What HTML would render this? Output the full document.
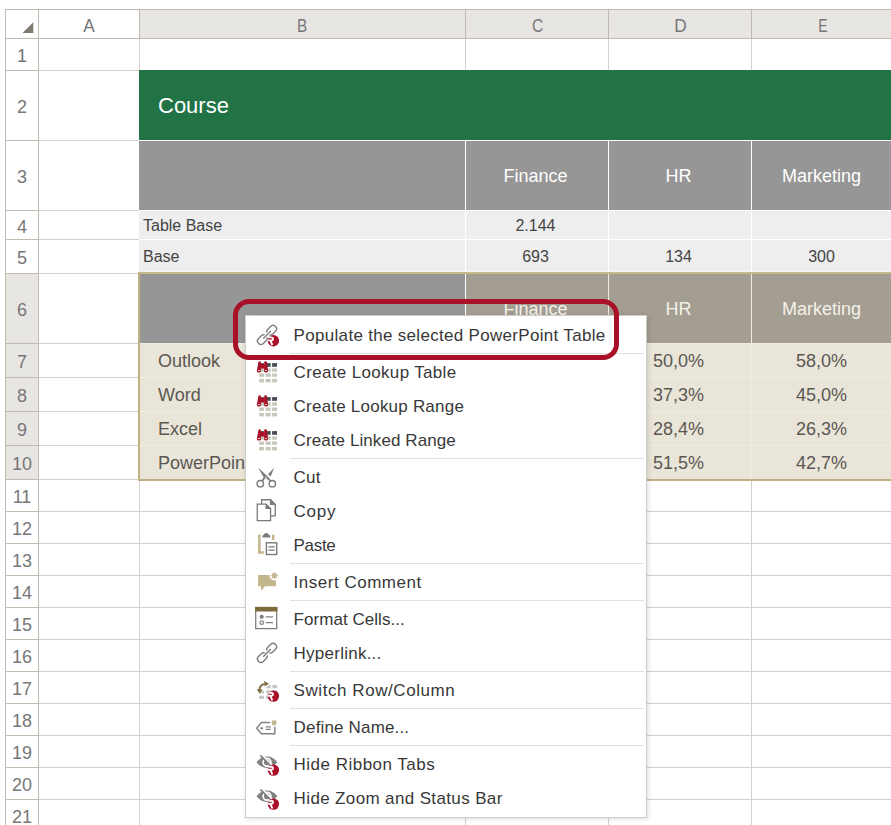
<!DOCTYPE html>
<html><head><meta charset="utf-8"><title>Excel context menu</title>
<style>
html,body{margin:0;padding:0;}
body{width:891px;height:825px;overflow:hidden;background:#fff;position:relative;font-family:"Liberation Sans",sans-serif;}
#g>div,#g>svg{position:absolute;}
.t{white-space:nowrap;text-align:center;overflow:visible;}
.t.l{text-align:left;}
.hd{font-size:18px;color:#777;}
.title{font-size:22px;color:#fff;text-align:left;}
.h3{font-size:18px;color:#fff;}
.h3.sel{color:#f4f1ea;}
.d{font-size:16px;color:#444;}
.p{font-size:18px;color:#5b5852;}
#m{position:absolute;left:245px;top:315px;width:400px;height:497px;padding:2px 0;border:1px solid #cfcdc9;background:#fff;box-shadow:1px 1px 5px rgba(0,0,0,0.14);}
#m .i{position:relative;height:34px;line-height:34px;font-size:17px;color:#383838;white-space:nowrap;}
#m .i span{position:absolute;left:47.6px;top:1px;}
#m .i svg{position:absolute;left:9px;top:5px;overflow:visible;}
#m .s{height:1px;margin:1px 2px 1px 44px;background:#e1e1e1;}
#hl{position:absolute;left:233px;top:299px;width:376px;height:51px;border:5px solid #a81127;border-radius:16px;}

</style></head>
<body>
<div id="g">
<div style="left:140px;top:10px;width:751px;height:28px;background:#e8e6e2;"></div>
<div style="left:6px;top:274px;width:32px;height:205px;background:#e8e6e2;"></div>
<div style="left:139px;top:39px;width:1px;height:786px;background:#d4d1cb;"></div>
<div style="left:465px;top:39px;width:1px;height:786px;background:#d4d1cb;"></div>
<div style="left:608px;top:39px;width:1px;height:786px;background:#d4d1cb;"></div>
<div style="left:751px;top:39px;width:1px;height:786px;background:#d4d1cb;"></div>
<div style="left:39px;top:70px;width:852px;height:1px;background:#d4d1cb;"></div>
<div style="left:39px;top:140px;width:852px;height:1px;background:#d4d1cb;"></div>
<div style="left:39px;top:210px;width:852px;height:1px;background:#d4d1cb;"></div>
<div style="left:39px;top:239px;width:852px;height:1px;background:#d4d1cb;"></div>
<div style="left:39px;top:273px;width:852px;height:1px;background:#d4d1cb;"></div>
<div style="left:39px;top:343px;width:852px;height:1px;background:#d4d1cb;"></div>
<div style="left:39px;top:377px;width:852px;height:1px;background:#d4d1cb;"></div>
<div style="left:39px;top:411px;width:852px;height:1px;background:#d4d1cb;"></div>
<div style="left:39px;top:445px;width:852px;height:1px;background:#d4d1cb;"></div>
<div style="left:39px;top:479px;width:852px;height:1px;background:#d4d1cb;"></div>
<div style="left:39px;top:511px;width:852px;height:1px;background:#d4d1cb;"></div>
<div style="left:39px;top:543px;width:852px;height:1px;background:#d4d1cb;"></div>
<div style="left:39px;top:575px;width:852px;height:1px;background:#d4d1cb;"></div>
<div style="left:39px;top:607px;width:852px;height:1px;background:#d4d1cb;"></div>
<div style="left:39px;top:639px;width:852px;height:1px;background:#d4d1cb;"></div>
<div style="left:39px;top:671px;width:852px;height:1px;background:#d4d1cb;"></div>
<div style="left:39px;top:703px;width:852px;height:1px;background:#d4d1cb;"></div>
<div style="left:39px;top:735px;width:852px;height:1px;background:#d4d1cb;"></div>
<div style="left:39px;top:767px;width:852px;height:1px;background:#d4d1cb;"></div>
<div style="left:39px;top:799px;width:852px;height:1px;background:#d4d1cb;"></div>
<div style="left:39px;top:831px;width:852px;height:1px;background:#d4d1cb;"></div>
<div style="left:5px;top:9px;width:886px;height:1px;background:#c0bbae;"></div>
<div style="left:5px;top:38px;width:886px;height:1px;background:#c0bbae;"></div>
<div style="left:5px;top:9px;width:1px;height:30px;background:#c0bbae;"></div>
<div style="left:38px;top:9px;width:1px;height:30px;background:#c0bbae;"></div>
<div style="left:139px;top:9px;width:1px;height:30px;background:#c0bbae;"></div>
<div style="left:465px;top:9px;width:1px;height:30px;background:#c0bbae;"></div>
<div style="left:608px;top:9px;width:1px;height:30px;background:#c0bbae;"></div>
<div style="left:751px;top:9px;width:1px;height:30px;background:#c0bbae;"></div>
<div style="left:5px;top:9px;width:1px;height:816px;background:#c0bbae;"></div>
<div style="left:38px;top:9px;width:1px;height:816px;background:#c0bbae;"></div>
<div style="left:5px;top:70px;width:34px;height:1px;background:#c0bbae;"></div>
<div style="left:5px;top:140px;width:34px;height:1px;background:#c0bbae;"></div>
<div style="left:5px;top:210px;width:34px;height:1px;background:#c0bbae;"></div>
<div style="left:5px;top:239px;width:34px;height:1px;background:#c0bbae;"></div>
<div style="left:5px;top:273px;width:34px;height:1px;background:#c0bbae;"></div>
<div style="left:5px;top:343px;width:34px;height:1px;background:#c0bbae;"></div>
<div style="left:5px;top:377px;width:34px;height:1px;background:#c0bbae;"></div>
<div style="left:5px;top:411px;width:34px;height:1px;background:#c0bbae;"></div>
<div style="left:5px;top:445px;width:34px;height:1px;background:#c0bbae;"></div>
<div style="left:5px;top:479px;width:34px;height:1px;background:#c0bbae;"></div>
<div style="left:5px;top:511px;width:34px;height:1px;background:#c0bbae;"></div>
<div style="left:5px;top:543px;width:34px;height:1px;background:#c0bbae;"></div>
<div style="left:5px;top:575px;width:34px;height:1px;background:#c0bbae;"></div>
<div style="left:5px;top:607px;width:34px;height:1px;background:#c0bbae;"></div>
<div style="left:5px;top:639px;width:34px;height:1px;background:#c0bbae;"></div>
<div style="left:5px;top:671px;width:34px;height:1px;background:#c0bbae;"></div>
<div style="left:5px;top:703px;width:34px;height:1px;background:#c0bbae;"></div>
<div style="left:5px;top:735px;width:34px;height:1px;background:#c0bbae;"></div>
<div style="left:5px;top:767px;width:34px;height:1px;background:#c0bbae;"></div>
<div style="left:5px;top:799px;width:34px;height:1px;background:#c0bbae;"></div>
<div style="left:5px;top:831px;width:34px;height:1px;background:#c0bbae;"></div>
<svg style="left:22px;top:22px" width="12" height="12" viewBox="0 0 12 12"><path d="M11.3 0.3 L11.3 11 L0.5 11 Z" fill="#807c72"/></svg>
<div class="t hd" style="left:39px;top:12px;width:100px;height:28px;line-height:28px;"><span style="display:inline-block;transform:scaleX(0.96)">A</span></div>
<div class="t hd" style="left:140px;top:12px;width:325px;height:28px;line-height:28px;"><span style="display:inline-block;transform:scaleX(0.85)">B</span></div>
<div class="t hd" style="left:466px;top:12px;width:142px;height:28px;line-height:28px;"><span style="display:inline-block;transform:scaleX(0.86)">C</span></div>
<div class="t hd" style="left:609px;top:12px;width:142px;height:28px;line-height:28px;"><span style="display:inline-block;transform:scaleX(0.96)">D</span></div>
<div class="t hd" style="left:752px;top:12px;width:142px;height:28px;line-height:28px;"><span style="display:inline-block;transform:scaleX(0.78)">E</span></div>
<div class="t hd" style="left:6px;top:41px;width:32px;height:31px;line-height:31px;">1</div>
<div class="t hd" style="left:6px;top:73px;width:32px;height:69px;line-height:69px;">2</div>
<div class="t hd" style="left:6px;top:143px;width:32px;height:69px;line-height:69px;">3</div>
<div class="t hd" style="left:6px;top:213px;width:32px;height:28px;line-height:28px;">4</div>
<div class="t hd" style="left:6px;top:242px;width:32px;height:33px;line-height:33px;">5</div>
<div class="t hd" style="left:6px;top:276px;width:32px;height:69px;line-height:69px;">6</div>
<div class="t hd" style="left:6px;top:346px;width:32px;height:33px;line-height:33px;">7</div>
<div class="t hd" style="left:6px;top:380px;width:32px;height:33px;line-height:33px;">8</div>
<div class="t hd" style="left:6px;top:414px;width:32px;height:33px;line-height:33px;">9</div>
<div class="t hd" style="left:6px;top:448px;width:32px;height:33px;line-height:33px;">10</div>
<div class="t hd" style="left:6px;top:482px;width:32px;height:31px;line-height:31px;">11</div>
<div class="t hd" style="left:6px;top:514px;width:32px;height:31px;line-height:31px;">12</div>
<div class="t hd" style="left:6px;top:546px;width:32px;height:31px;line-height:31px;">13</div>
<div class="t hd" style="left:6px;top:578px;width:32px;height:31px;line-height:31px;">14</div>
<div class="t hd" style="left:6px;top:610px;width:32px;height:31px;line-height:31px;">15</div>
<div class="t hd" style="left:6px;top:642px;width:32px;height:31px;line-height:31px;">16</div>
<div class="t hd" style="left:6px;top:674px;width:32px;height:31px;line-height:31px;">17</div>
<div class="t hd" style="left:6px;top:706px;width:32px;height:31px;line-height:31px;">18</div>
<div class="t hd" style="left:6px;top:738px;width:32px;height:31px;line-height:31px;">19</div>
<div class="t hd" style="left:6px;top:770px;width:32px;height:31px;line-height:31px;">20</div>
<div class="t hd" style="left:6px;top:802px;width:32px;height:31px;line-height:31px;">21</div>
<div style="left:139px;top:70px;width:752px;height:70px;background:#217346;"></div>
<div style="left:139px;top:140px;width:752px;height:1px;background:#ffffff;"></div>
<div style="left:139px;top:141px;width:752px;height:69px;background:#969696;"></div>
<div style="left:139px;top:210px;width:752px;height:1px;background:#ffffff;"></div>
<div style="left:139px;top:211px;width:752px;height:28px;background:#eeeeee;"></div>
<div style="left:139px;top:239px;width:752px;height:1px;background:#ffffff;"></div>
<div style="left:139px;top:240px;width:752px;height:33px;background:#eeeeee;"></div>
<div style="left:139px;top:271px;width:752px;height:1px;background:#f5f5f8;"></div>
<div style="left:465px;top:141px;width:1px;height:132px;background:#ffffff;"></div>
<div style="left:608px;top:141px;width:1px;height:132px;background:#ffffff;"></div>
<div style="left:751px;top:141px;width:1px;height:132px;background:#ffffff;"></div>
<div style="left:139px;top:274px;width:326px;height:69px;background:#969696;"></div>
<div style="left:465px;top:274px;width:426px;height:69px;background:#a39e91;"></div>
<div style="left:465px;top:274px;width:1px;height:69px;background:#ffffff;"></div>
<div style="left:608px;top:274px;width:1px;height:69px;background:#efebdf;"></div>
<div style="left:751px;top:274px;width:1px;height:69px;background:#efebdf;"></div>
<div style="left:139px;top:343px;width:752px;height:136px;background:#e9e5d9;"></div>
<div style="left:139px;top:343px;width:752px;height:1px;background:#f0ece0;"></div>
<div style="left:139px;top:377px;width:752px;height:1px;background:#f0ece0;"></div>
<div style="left:139px;top:411px;width:752px;height:1px;background:#f0ece0;"></div>
<div style="left:139px;top:445px;width:752px;height:1px;background:#f0ece0;"></div>
<div style="left:465px;top:343px;width:1px;height:136px;background:#f0ece0;"></div>
<div style="left:608px;top:343px;width:1px;height:136px;background:#f0ece0;"></div>
<div style="left:751px;top:343px;width:1px;height:136px;background:#f0ece0;"></div>
<div style="left:138px;top:272px;width:753px;height:2px;background:#c6b98a;"></div>
<div style="left:138px;top:272px;width:2px;height:209px;background:#bfb182;"></div>
<div style="left:138px;top:479px;width:753px;height:2px;background:#bfb182;"></div>
<div class="t title" style="left:158px;top:71px;width:300px;height:69px;line-height:69px;">Course</div>
<div class="t h3" style="left:464.5px;top:142px;width:142px;height:69px;line-height:69px;">Finance</div>
<div class="t h3 sel" style="left:464.5px;top:275px;width:142px;height:69px;line-height:69px;">Finance</div>
<div class="t h3" style="left:607.5px;top:142px;width:142px;height:69px;line-height:69px;">HR</div>
<div class="t h3 sel" style="left:607.5px;top:275px;width:142px;height:69px;line-height:69px;">HR</div>
<div class="t h3" style="left:750.5px;top:142px;width:142px;height:69px;line-height:69px;">Marketing</div>
<div class="t h3 sel" style="left:750.5px;top:275px;width:142px;height:69px;line-height:69px;">Marketing</div>
<div class="t d l" style="left:143px;top:212px;width:300px;height:28px;line-height:28px;">Table Base</div>
<div class="t d l" style="left:143px;top:240px;width:300px;height:33px;line-height:33px;">Base</div>
<div class="t d" style="left:464.5px;top:212px;width:142px;height:28px;line-height:28px;">2.144</div>
<div class="t d" style="left:464.5px;top:240px;width:142px;height:33px;line-height:33px;">693</div>
<div class="t d" style="left:607.5px;top:240px;width:142px;height:33px;line-height:33px;">134</div>
<div class="t d" style="left:750.5px;top:240px;width:142px;height:33px;line-height:33px;">300</div>
<div class="t p l" style="left:158px;top:345px;width:300px;height:33px;line-height:33px;">Outlook</div>
<div class="t p" style="left:607.5px;top:345px;width:142px;height:33px;line-height:33px;">50,0%</div>
<div class="t p" style="left:750.5px;top:345px;width:142px;height:33px;line-height:33px;">58,0%</div>
<div class="t p l" style="left:158px;top:379px;width:300px;height:33px;line-height:33px;">Word</div>
<div class="t p" style="left:607.5px;top:379px;width:142px;height:33px;line-height:33px;">37,3%</div>
<div class="t p" style="left:750.5px;top:379px;width:142px;height:33px;line-height:33px;">45,0%</div>
<div class="t p l" style="left:158px;top:413px;width:300px;height:33px;line-height:33px;">Excel</div>
<div class="t p" style="left:607.5px;top:413px;width:142px;height:33px;line-height:33px;">28,4%</div>
<div class="t p" style="left:750.5px;top:413px;width:142px;height:33px;line-height:33px;">26,3%</div>
<div class="t p l" style="left:158px;top:447px;width:300px;height:33px;line-height:33px;">PowerPoint</div>
<div class="t p" style="left:607.5px;top:447px;width:142px;height:33px;line-height:33px;">51,5%</div>
<div class="t p" style="left:750.5px;top:447px;width:142px;height:33px;line-height:33px;">42,7%</div>
</div>
<div id="m">
<div class="i"><svg width="24" height="24" viewBox="0 0 24 24"><g fill="none" stroke="#808080" stroke-width="1.4"><rect x="-5.3" y="-3.4" width="10.6" height="6.8" rx="3.4" transform="translate(16.74,7.16) rotate(-45)"/><rect x="-5.3" y="-3.4" width="10.6" height="6.8" rx="3.4" transform="translate(7.26,16.64) rotate(-45)"/></g><path d="M10.16,13.74 L13.84,10.06" stroke="#fff" stroke-width="3.4" fill="none"/><path d="M8.18,15.72 L15.82,8.08" stroke="#808080" stroke-width="1.4" fill="none"/><clipPath id="rb1"><circle cx="0" cy="0" r="5.7"/></clipPath><g transform="translate(18.4,17.7)"><circle cx="0" cy="0" r="5.7" fill="#a81127"/><g clip-path="url(#rb1)" fill="none" stroke="#fff" stroke-width="1.9"><path d="M-6.5,-3.3 H-1.9 a1.5,1.5 0 0 1 0,3.0 H-6.5 M-2.9,-0.3 L-1.1,4.4"/></g></g></svg><span style="letter-spacing:0.308px">Populate the selected PowerPoint Table</span></div>
<div class="s"></div>
<div class="i"><svg width="24" height="24" viewBox="0 0 24 24"><rect x="4.2" y="3.1" width="4.7" height="3.7" fill="#454c54"/><rect x="10.6" y="3.1" width="5.1" height="3.7" fill="#454c54"/><rect x="17.1" y="3.1" width="4.9" height="3.7" fill="#454c54"/><rect x="4.2" y="8.4" width="4.7" height="3.3" fill="#c5c7b9"/><rect x="10.6" y="8.4" width="5.1" height="3.3" fill="#c5c7b9"/><rect x="17.1" y="8.4" width="4.9" height="3.3" fill="#c5c7b9"/><rect x="4.2" y="13.5" width="4.7" height="3.3" fill="#c5c7b9"/><rect x="10.6" y="13.5" width="5.1" height="3.3" fill="#c5c7b9"/><rect x="17.1" y="13.5" width="4.9" height="3.3" fill="#c5c7b9"/><rect x="4.2" y="18.9" width="4.7" height="3.5" fill="#c5c7b9"/><rect x="10.6" y="18.9" width="5.1" height="3.5" fill="#c5c7b9"/><rect x="17.1" y="18.9" width="4.9" height="3.5" fill="#c5c7b9"/><g fill="#a81127"><path d="M3.4,2.3 Q3.5,1.3 4.6,1.3 Q5.8,1.3 5.9,2.3 L5.9,11.3 Q5.9,12.6 4,12.6 Q1.7,12.6 1.8,11 Z"/><path d="M9.2,2.3 Q9.3,1.3 10.6,1.3 Q11.9,1.3 12,2.3 L13,11 Q13,12.6 11,12.6 Q9.1,12.6 9.1,11.3 Z"/><rect x="5.6" y="3.9" width="3.9" height="4.7"/></g><rect x="3.1" y="10.1" width="1.8" height="0.9" fill="#fff"/><rect x="10.2" y="10.1" width="1.7" height="0.9" fill="#fff"/></svg><span style="letter-spacing:0.333px">Create Lookup Table</span></div>
<div class="i"><svg width="24" height="24" viewBox="0 0 24 24"><rect x="4.2" y="3.1" width="4.7" height="3.7" fill="#454c54"/><rect x="10.6" y="3.1" width="5.1" height="3.7" fill="#454c54"/><rect x="17.1" y="3.1" width="4.9" height="3.7" fill="#454c54"/><rect x="4.2" y="8.4" width="4.7" height="3.3" fill="#c5c7b9"/><rect x="10.6" y="8.4" width="5.1" height="3.3" fill="#c5c7b9"/><rect x="17.1" y="8.4" width="4.9" height="3.3" fill="#c5c7b9"/><rect x="4.2" y="13.5" width="4.7" height="3.3" fill="#c5c7b9"/><rect x="10.6" y="13.5" width="5.1" height="3.3" fill="#c5c7b9"/><rect x="17.1" y="13.5" width="4.9" height="3.3" fill="#c5c7b9"/><rect x="4.2" y="18.9" width="4.7" height="3.5" fill="#c5c7b9"/><rect x="10.6" y="18.9" width="5.1" height="3.5" fill="#c5c7b9"/><rect x="17.1" y="18.9" width="4.9" height="3.5" fill="#c5c7b9"/><g fill="#a81127"><path d="M3.4,2.3 Q3.5,1.3 4.6,1.3 Q5.8,1.3 5.9,2.3 L5.9,11.3 Q5.9,12.6 4,12.6 Q1.7,12.6 1.8,11 Z"/><path d="M9.2,2.3 Q9.3,1.3 10.6,1.3 Q11.9,1.3 12,2.3 L13,11 Q13,12.6 11,12.6 Q9.1,12.6 9.1,11.3 Z"/><rect x="5.6" y="3.9" width="3.9" height="4.7"/></g><rect x="3.1" y="10.1" width="1.8" height="0.9" fill="#fff"/><rect x="10.2" y="10.1" width="1.7" height="0.9" fill="#fff"/></svg><span style="letter-spacing:0.217px">Create Lookup Range</span></div>
<div class="i"><svg width="24" height="24" viewBox="0 0 24 24"><rect x="4.2" y="3.1" width="4.7" height="3.7" fill="#454c54"/><rect x="10.6" y="3.1" width="5.1" height="3.7" fill="#454c54"/><rect x="17.1" y="3.1" width="4.9" height="3.7" fill="#454c54"/><rect x="4.2" y="8.4" width="4.7" height="3.3" fill="#c5c7b9"/><rect x="10.6" y="8.4" width="5.1" height="3.3" fill="#c5c7b9"/><rect x="17.1" y="8.4" width="4.9" height="3.3" fill="#c5c7b9"/><rect x="4.2" y="13.5" width="4.7" height="3.3" fill="#c5c7b9"/><rect x="10.6" y="13.5" width="5.1" height="3.3" fill="#c5c7b9"/><rect x="17.1" y="13.5" width="4.9" height="3.3" fill="#c5c7b9"/><rect x="4.2" y="18.9" width="4.7" height="3.5" fill="#c5c7b9"/><rect x="10.6" y="18.9" width="5.1" height="3.5" fill="#c5c7b9"/><rect x="17.1" y="18.9" width="4.9" height="3.5" fill="#c5c7b9"/><g fill="#a81127"><path d="M3.4,2.3 Q3.5,1.3 4.6,1.3 Q5.8,1.3 5.9,2.3 L5.9,11.3 Q5.9,12.6 4,12.6 Q1.7,12.6 1.8,11 Z"/><path d="M9.2,2.3 Q9.3,1.3 10.6,1.3 Q11.9,1.3 12,2.3 L13,11 Q13,12.6 11,12.6 Q9.1,12.6 9.1,11.3 Z"/><rect x="5.6" y="3.9" width="3.9" height="4.7"/></g><rect x="3.1" y="10.1" width="1.8" height="0.9" fill="#fff"/><rect x="10.2" y="10.1" width="1.7" height="0.9" fill="#fff"/></svg><span style="letter-spacing:0.083px">Create Linked Range</span></div>
<div class="s"></div>
<div class="i"><svg width="24" height="24" viewBox="0 0 24 24"><g fill="none" stroke="#7a7a7a" stroke-width="1.4"><circle cx="5.3" cy="18.7" r="3.2"/><circle cx="17.3" cy="18.7" r="3.2"/></g><path d="M3.2,2.7 L13.5,12.2 L16,15.4 L14.8,16.3 L12,13.9 L8.9,12.7 Z" fill="#7a7a7a"/><path d="M19.2,2.7 L15.6,11.6 L12.9,9.3 Z" fill="#7a7a7a"/><path d="M9.3,13 L7.2,15.9" stroke="#7a7a7a" stroke-width="1.9" fill="none"/><circle cx="11.1" cy="12.6" r="0.75" fill="#fff"/></svg><span style="letter-spacing:0.200px">Cut</span></div>
<div class="i"><svg width="24" height="24" viewBox="0 0 24 24"><g fill="#fff" stroke="#7a7a7a" stroke-width="1.3" stroke-linejoin="miter"><path d="M6.65,0.75 H15.5 L20.25,5.3 V16.85 H6.65 Z"/><path d="M2.25,5.15 H11.1 L15.55,9.5 V21.65 H2.25 Z"/></g><path d="M14.9,0.4 V5.9 H20.6 Z" fill="#7a7a7a"/><path d="M10.5,4.8 V10.1 H15.9 Z" fill="#7a7a7a"/></svg><span style="letter-spacing:0.733px">Copy</span></div>
<div class="i"><svg width="24" height="24" viewBox="0 0 24 24"><path d="M3.1,1.5 H5.6 V18.2 H8.9 V20.7 H3.1 Z" fill="#c3b68c"/><rect x="16.9" y="1.8" width="2.55" height="5.1" fill="#c3b68c"/><path d="M7.4,4.5 V3 Q7.4,2.1 8.6,2.1 Q9,-0.1 11.3,-0.1 Q13.6,-0.1 14,2.1 Q15.2,2.1 15.2,3 V4.5 Z" fill="#7c7c7c"/><rect x="11.4" y="9.8" width="10.3" height="11.7" fill="#fff" stroke="#7a7a7a" stroke-width="1.4"/><path d="M13.4,13.8 H19.8 M13.4,17.1 H19.8" stroke="#7a7a7a" stroke-width="1.2" fill="none"/></svg><span style="letter-spacing:-0.325px">Paste</span></div>
<div class="s"></div>
<div class="i"><svg width="24" height="24" viewBox="0 0 24 24"><path d="M3.1,4.9 H20.9 V16.2 H10 L6.3,20.9 L6,16.2 H3.1 Z" fill="#c3b68c"/><circle cx="19.45" cy="5.6" r="4.9" fill="#fff"/><polygon points="19.45,1.90 20.33,3.48 22.07,2.98 21.57,4.72 23.15,5.60 21.57,6.48 22.07,8.22 20.33,7.72 19.45,9.30 18.57,7.72 16.83,8.22 17.33,6.48 15.75,5.60 17.33,4.72 16.83,2.98 18.57,3.48" fill="#c3b68c"/></svg><span style="letter-spacing:0.508px">Insert Comment</span></div>
<div class="s"></div>
<div class="i"><svg width="24" height="24" viewBox="0 0 24 24"><rect x="0.7" y="0.6" width="21" height="21" fill="#fff" stroke="#808080" stroke-width="1.3"/><rect x="0" y="-0.1" width="22.4" height="4.6" fill="#7d6b3c"/><circle cx="6.7" cy="9.8" r="2.1" fill="#808080"/><circle cx="6.7" cy="15.7" r="1.75" fill="none" stroke="#808080" stroke-width="1.2"/><path d="M10.7,9.8 H18 M10.7,15.7 H18" stroke="#808080" stroke-width="1.2" fill="none"/></svg><span style="letter-spacing:0.043px">Format Cells...</span></div>
<div class="i"><svg width="24" height="24" viewBox="0 0 24 24"><g fill="none" stroke="#7a7a7a" stroke-width="1.4"><rect x="-5.3" y="-3.4" width="10.6" height="6.8" rx="3.4" transform="translate(16.74,7.16) rotate(-45)"/><rect x="-5.3" y="-3.4" width="10.6" height="6.8" rx="3.4" transform="translate(7.26,16.64) rotate(-45)"/></g><path d="M10.16,13.74 L13.84,10.06" stroke="#fff" stroke-width="3.4" fill="none"/><path d="M8.18,15.72 L15.82,8.08" stroke="#7a7a7a" stroke-width="1.4" fill="none"/></svg><span style="letter-spacing:0.245px">Hyperlink...</span></div>
<div class="s"></div>
<div class="i"><svg width="24" height="24" viewBox="0 0 24 24"><rect x="4.2" y="7" width="4.7" height="3.3" fill="#c3c3c3"/><rect x="11.3" y="7" width="4.5" height="3.3" fill="#c3c3c3"/><rect x="17.5" y="7" width="4.7" height="3.3" fill="#c3c3c3"/><rect x="4.2" y="12.3" width="4.7" height="3.2" fill="#c3c3c3"/><rect x="11.3" y="12.3" width="4.5" height="3.2" fill="#c3c3c3"/><rect x="17.5" y="12.3" width="4.7" height="3.2" fill="#c3c3c3"/><rect x="4.2" y="17.7" width="4.7" height="3.1" fill="#c3c3c3"/><rect x="11.3" y="17.7" width="4.5" height="3.1" fill="#c3c3c3"/><rect x="17.5" y="17.7" width="4.7" height="3.1" fill="#c3c3c3"/><path d="M0,0 L21.8,0 L0,19.2 Z" fill="#fff"/><path d="M4.7,11.4 Q4.5,7.2 9.5,5.8" fill="none" stroke="#7d6b3c" stroke-width="1.9"/><path d="M1.8,11 L7.6,11.4 L4.5,15.7 Z" fill="#7d6b3c"/><path d="M9.1,3 L14,5.7 L9.6,8.6 Z" fill="#7d6b3c"/><clipPath id="rb2"><circle cx="0" cy="0" r="5.7"/></clipPath><g transform="translate(18.4,18.1)"><circle cx="0" cy="0" r="5.7" fill="#a81127"/><g clip-path="url(#rb2)" fill="none" stroke="#fff" stroke-width="1.9"><path d="M-6.5,-3.3 H-1.9 a1.5,1.5 0 0 1 0,3.0 H-6.5 M-2.9,-0.3 L-1.1,4.4"/></g></g></svg><span style="letter-spacing:0.562px">Switch Row/Column</span></div>
<div class="s"></div>
<div class="i"><svg width="24" height="24" viewBox="0 0 24 24"><path d="M15.1,7.45 H6.4 L1.7,13.2 L6.4,18.7 H19.8 V11.8" fill="none" stroke="#808080" stroke-width="1.4"/><circle cx="6.7" cy="13.2" r="1.25" fill="#808080"/><path d="M10.7,11.8 H15.8 M10.7,14.4 H15.8" stroke="#808080" stroke-width="1.2" fill="none"/><polygon points="19.10,4.40 19.90,5.86 21.50,5.40 21.04,7.00 22.50,7.80 21.04,8.60 21.50,10.20 19.90,9.74 19.10,11.20 18.30,9.74 16.70,10.20 17.16,8.60 15.70,7.80 17.16,7.00 16.70,5.40 18.30,5.86" fill="#c3b68c"/></svg><span style="letter-spacing:0.162px">Define Name...</span></div>
<div class="s"></div>
<div class="i"><svg width="24" height="24" viewBox="0 0 24 24"><path d="M1.5,10.3 Q6,4.3 12,4.4 Q18,4.3 22.3,10.3 Q18,16 12,16 Q6,16 1.5,10.3 Z" fill="#808080"/><circle cx="12" cy="10.3" r="3.9" fill="none" stroke="#fff" stroke-width="1.7"/><path d="M13.4,8 L14.6,9.2" stroke="#fff" stroke-width="0.9" fill="none"/><path d="M6.6,2.6 L17.4,13.4" stroke="#fff" stroke-width="1.5" fill="none"/><path d="M5.3,3.4 L16.5,14.7" stroke="#808080" stroke-width="1.6" fill="none"/><clipPath id="rb3"><circle cx="0" cy="0" r="5.7"/></clipPath><g transform="translate(18.4,18.1)"><circle cx="0" cy="0" r="5.7" fill="#a81127"/><g clip-path="url(#rb3)" fill="none" stroke="#fff" stroke-width="1.9"><path d="M-6.5,-3.3 H-1.9 a1.5,1.5 0 0 1 0,3.0 H-6.5 M-2.9,-0.3 L-1.1,4.4"/></g></g></svg><span style="letter-spacing:0.480px">Hide Ribbon Tabs</span></div>
<div class="i"><svg width="24" height="24" viewBox="0 0 24 24"><path d="M1.5,10.3 Q6,4.3 12,4.4 Q18,4.3 22.3,10.3 Q18,16 12,16 Q6,16 1.5,10.3 Z" fill="#808080"/><circle cx="12" cy="10.3" r="3.9" fill="none" stroke="#fff" stroke-width="1.7"/><path d="M13.4,8 L14.6,9.2" stroke="#fff" stroke-width="0.9" fill="none"/><path d="M6.6,2.6 L17.4,13.4" stroke="#fff" stroke-width="1.5" fill="none"/><path d="M5.3,3.4 L16.5,14.7" stroke="#808080" stroke-width="1.6" fill="none"/><clipPath id="rb4"><circle cx="0" cy="0" r="5.7"/></clipPath><g transform="translate(18.4,18.1)"><circle cx="0" cy="0" r="5.7" fill="#a81127"/><g clip-path="url(#rb4)" fill="none" stroke="#fff" stroke-width="1.9"><path d="M-6.5,-3.3 H-1.9 a1.5,1.5 0 0 1 0,3.0 H-6.5 M-2.9,-0.3 L-1.1,4.4"/></g></g></svg><span style="letter-spacing:0.365px">Hide Zoom and Status Bar</span></div>
</div>
<div id="hl"></div>
</body></html>
